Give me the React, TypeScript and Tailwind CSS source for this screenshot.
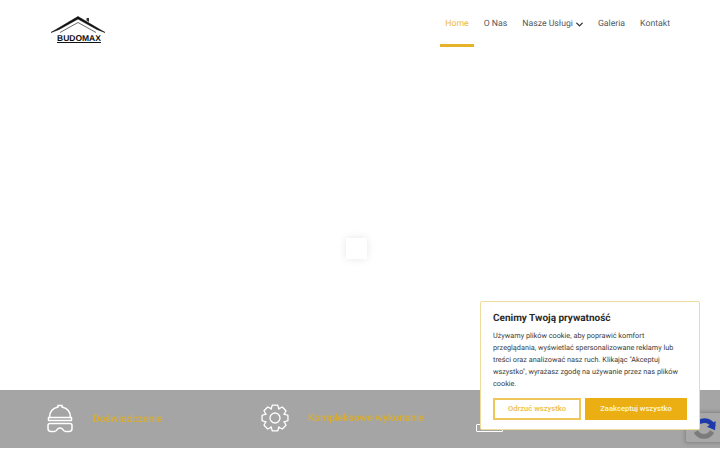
import React from 'react';
import { ChevronDown } from 'lucide-react';

const links = ['O Nas', 'Nasze Usługi', 'Galeria', 'Kontakt'];

const Logo = () => (
  <div className="w-[56px] h-[28px] shrink-0">
    <svg viewBox="0 0 56 20" className="w-[56px] h-[20px]">
      <path d="M1 18.5 L28 2.5 L55 18.5 L47 15.5 L28 5 L9 15.5 Z" fill="#111" stroke="#111" strokeWidth="0.6" strokeLinejoin="round" />
      <path d="M10 18.5 L28 8.5 L46 18.5" fill="none" stroke="#444" strokeWidth="0.8" />
      <path d="M36.5 4 L39 4 L39 8 L36.5 6.5 Z" fill="#333" />
    </svg>
    <span className="block ml-[7px] text-[8.5px] leading-[8px] font-bold text-[#111] underline font-['Liberation_Sans',sans-serif]">BUDOMAX</span>
  </div>
);

const HelmetIcon = () => (
  <svg viewBox="0 0 26 29" className="w-[26px] h-[29px] shrink-0" fill="none" stroke="#fff" strokeWidth="1.5">
    <path d="M2.5 13.5 C2.5 7.5 6.5 4 11 3 L11 1.5 L15 1.5 L15 3 C19.5 4 23.5 7.5 23.5 13.5" />
    <path d="M1.5 13.5 H24.5 V16.5 H1.5 Z" strokeLinejoin="round" />
    <path d="M3 19.5 H23 Q25 19.5 25 21.5 V24.5 Q25 27.5 22 27.5 H18.5 Q16.5 27.5 15.5 25 Q13 23 10.5 25 Q9.5 27.5 7.5 27.5 H4 Q1 27.5 1 24.5 V21.5 Q1 19.5 3 19.5 Z" />
  </svg>
);

// eight tooth gear outline, same stroke weight as the helmet
const gearPath = () => {
  const pts: string[] = [];
  for (let i = 0; i < 8; i++) {
    const a = (i * Math.PI) / 4;
    const steps: [number, number][] = [
      [9.8, -0.42],
      [13.2, -0.2],
      [13.2, 0.2],
      [9.8, 0.42],
    ];
    steps.forEach(([r, d]) => {
      const x = 14 + r * Math.sin(a + d);
      const y = 14 - r * Math.cos(a + d);
      pts.push(`${x.toFixed(2)} ${y.toFixed(2)}`);
    });
  }
  return `M${pts.join(' L')} Z`;
};

const GearIcon = () => (
  <svg viewBox="0 0 28 28" className="w-[28px] h-[28px] shrink-0" fill="none" stroke="#fff" strokeWidth="1.3" strokeLinejoin="round">
    <path d={gearPath()} />
    <circle cx="14" cy="14" r="5" />
  </svg>
);

const Feature = ({ icon, label }: { icon: React.ReactNode; label: string }) => (
  <div className="flex items-center gap-[20px] w-[215px]">
    <div className="w-[27px] flex justify-center">{icon}</div>
    <span className="text-[10.3px] font-medium text-[#d8ad34] blur-[0.4px]">{label}</span>
  </div>
);

export default function App() {
  return (
    <div className="relative w-[720px] h-[450px] overflow-hidden bg-white flex flex-col font-['Roboto',sans-serif] [text-rendering:geometricPrecision]">
      {/* Header */}
      <header className="h-[47px] flex justify-between pl-[50px] pr-[50px] pt-[14px]">
        <Logo />
        <nav className="flex items-start gap-[15px] pt-[4px] text-[8.7px] leading-[13px] text-[#54595f]">
          <div className="relative text-[#edbb3c]">
            Home
            <div className="absolute left-[-5px] right-[-5px] top-[26px] h-[3px] bg-[#e5b32a]" />
          </div>
          {links.map((link) => (
            <div key={link} className="flex items-center gap-[4px]">
              {link}
              {link === 'Nasze Usługi' && <ChevronDown className="w-[11px] h-[11px] -mx-[2.5px] text-[#333]" strokeWidth={3} />}
            </div>
          ))}
        </nav>
      </header>

      {/* Preloader */}
      <main className="flex-1 flex justify-center items-start pt-[191px] pr-[7px]">
        <div className="w-[21px] h-[21px] bg-white shadow-[0_0_8px_rgba(0,0,0,0.1)]" />
      </main>

      {/* Features band */}
      <section className="h-[58px] mb-[2px] bg-[#a5a5a5] flex pl-[46px] pt-[14px] items-start">
        <Feature icon={<HelmetIcon />} label="Doświadczenie" />
        <Feature icon={<GearIcon />} label="Kompleksowe wykonanie" />
        <Feature
          icon={<div className="mt-[20px] w-[27px] h-[8px] border-[1.5px] border-white rounded-[1px]" />}
          label=""
        />
      </section>

      {/* reCAPTCHA badge */}
      <div className="absolute left-[685px] top-[412px] w-[40px] h-[31px] bg-[#a8a8a8] border border-[#8f8f8f] rounded-[2px] shadow-[0_0_4px_rgba(0,0,0,0.2)]">
        <svg viewBox="0 0 24 24" className="absolute left-[4px] top-[1px] w-[28px] h-[28px]" fill="none">
          <path d="M8 7 A8 8 0 0 1 20 11" stroke="#1c3aa9" strokeWidth="4" />
          <path d="M22 6 L21.5 14 L14.5 11 Z" fill="#1c3aa9" />
          <path d="M19 15 A8 8 0 0 1 5 15" stroke="#7b7b7b" strokeWidth="4" />
        </svg>
      </div>

      {/* Cookie banner */}
      <div className="absolute left-[480px] top-[301px] w-[220px] h-[129px] bg-white border border-[#f0dc9a] rounded-[2px] px-[12px] pt-[10px] text-[#3c3c3c]">
        <h2 className="text-[10px] leading-[13px] font-bold text-[#2a2a2a]">Cenimy Twoją prywatność</h2>
        <p className="mt-[5px] text-[7.3px] leading-[12px] whitespace-nowrap">
          Używamy plików cookie, aby poprawić komfort<br />
          przeglądania, wyświetlać spersonalizowane reklamy lub<br />
          treści oraz analizować nasz ruch. Klikając "Akceptuj<br />
          wszystko", wyrażasz zgodę na używanie przez nas plików<br />
          cookie.
        </p>
        <div className="flex gap-[4px] mt-[8px]">
          <button className="w-[88px] h-[22px] border-2 border-[#eec65a] text-[#eec150] text-[7.6px] font-semibold">Odrzuć wszystko</button>
          <button className="w-[102px] h-[22px] bg-[#ebae13] text-[#fdf3d6] text-[7.6px] font-semibold">Zaakceptuj wszystko</button>
        </div>
      </div>
    </div>
  );
}
